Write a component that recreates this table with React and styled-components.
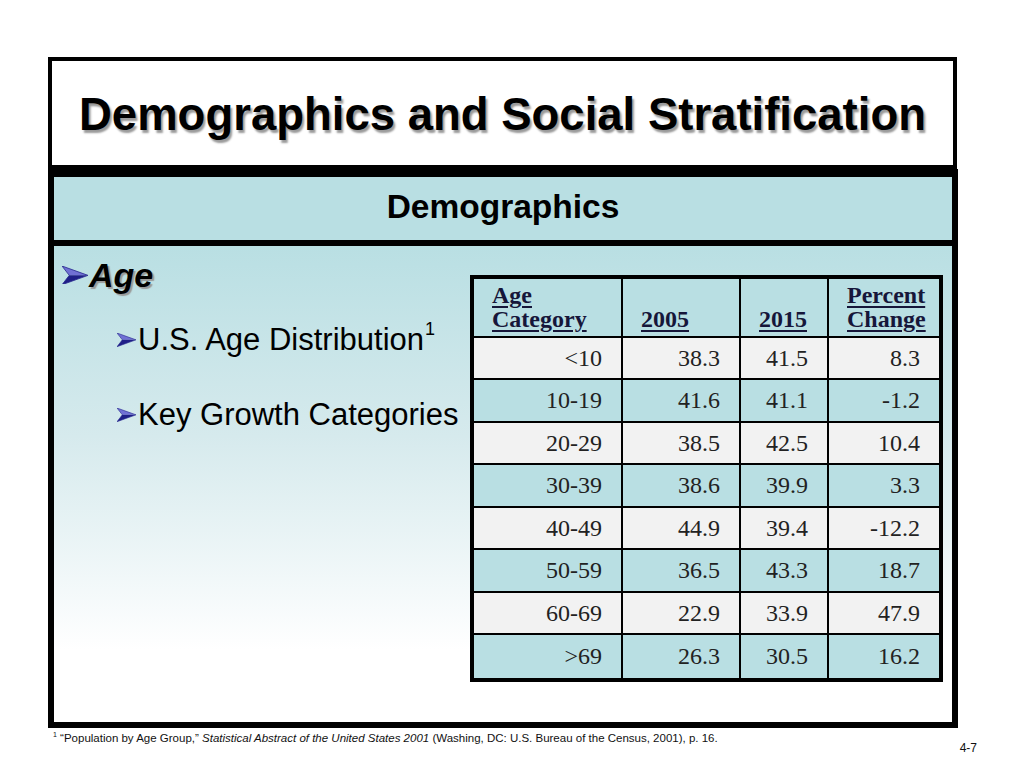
import React from 'react';
import styled, { createGlobalStyle } from 'styled-components';

const Global = createGlobalStyle`
  html, body { margin:0; padding:0; background:#fff; }
  body { font-family:"Liberation Sans", Arial, sans-serif; color:#000; }
`;

const Slide = styled.div`
  width:1024px; height:768px; box-sizing:border-box;
  padding:57px 66px 0 48px; display:flex; flex-direction:column;
`;

const TitleBox = styled.div`
  height:112px; box-sizing:border-box; width:909px; padding-top:3px;
  border:4px solid #000; display:flex; align-items:center; justify-content:center;
`;
const Title = styled.h1`
  margin:0; font-size:45.5px; font-weight:bold;
  text-shadow:2px 3px 2px #9a9a9a;
`;

const Band = styled.div`
  height:77px; box-sizing:border-box;
  border:6px solid #000; border-top-width:8px;
  background:#b9dfe3; display:flex; align-items:center; justify-content:center;
`;
const BandTitle = styled.h2`margin:0 0 4px; font-size:33.5px; font-weight:bold;`;

const Content = styled.div`
  height:482px; box-sizing:border-box;
  border:6px solid #000; border-top:none;
  background:linear-gradient(to bottom, #b9dfe3 0%, #d6eaed 40%, #ffffff 85%);
  display:flex;
`;

const Bullets = styled.div`width:416px; padding:9px 0 0 8px; box-sizing:border-box;`;
const Item = styled.div`
  display:flex; align-items:center; white-space:nowrap;
  margin-left:${p => p.$sub ? 55 : 0}px;
  margin-top:${p => p.$gap || 0}px;
  font-size:${p => p.$sub ? 31 : 34}px;
  line-height:${p => p.$sub ? 36 : 40}px;
  font-weight:${p => p.$sub ? 'normal' : 'bold'};
  font-style:${p => p.$sub ? 'normal' : 'italic'};
  text-shadow:${p => p.$sub ? 'none' : '2px 2px 1px #9a9a9a'};
`;
const Sup = styled.span`
  font-size:18px; line-height:0; align-self:flex-start; margin:7px 0 0 1px;
`;
const ArrowSvg = styled.svg`flex:none; margin-right:${p => p.$sub ? 2 : 1}px;`;

function Arrow({ size, sub }) {
  return (
    <ArrowSvg $sub={sub} width={size} height={size * 0.72} viewBox="0 0 25 18">
      <polygon points="0,0 25,9 7,9" fill="#7070d4" />
      <polygon points="7,9 25,9 0,18" fill="#1f1f88" />
      <polyline points="0,0 25,9 0,18 7,9 0,0" fill="none" stroke="#2a2a90" strokeWidth="0.8" />
    </ArrowSvg>
  );
}

const TableWrap = styled.div`padding-top:29px;`;
const Table = styled.table`
  border-collapse:separate; border-spacing:0; border:4px solid #000;
  font-family:"Liberation Serif", "Times New Roman", serif; font-size:24px;
`;
const Th = styled.th`
  width:${p => p.$w}px; height:59px; box-sizing:border-box;
  padding:0 12px 5px 18px; vertical-align:bottom; text-align:left;
  line-height:24px; font-weight:bold; color:#16163a; background:#b9dfe3;
  border-right:${p => p.$last ? 0 : 2}px solid #000; border-bottom:2px solid #000;
  span { text-decoration:underline; text-decoration-thickness:2px; text-underline-offset:3px; }
`;
const Td = styled.td`
  height:${p => p.$h}px; box-sizing:border-box; padding:0 19px 0 8px;
  text-align:right; vertical-align:middle; color:#222;
  background:${p => p.$alt ? '#b9dfe3' : '#f2f2f2'};
  border-right:${p => p.$last ? 0 : 2}px solid #000;
  border-bottom:${p => p.$bottom ? 0 : 2}px solid #000;
`;

const Footer = styled.div`
  display:flex; justify-content:space-between; padding:3px 0 0 5px;
  font-size:11.5px; color:#111; margin-right:-19px;
  sup { font-size:7px; }
`;
const PageNo = styled.div`font-size:12px; padding-top:10px;`;

const rows = [
  ['<10', '38.3', '41.5', '8.3'],
  ['10-19', '41.6', '41.1', '-1.2'],
  ['20-29', '38.5', '42.5', '10.4'],
  ['30-39', '38.6', '39.9', '3.3'],
  ['40-49', '44.9', '39.4', '-12.2'],
  ['50-59', '36.5', '43.3', '18.7'],
  ['60-69', '22.9', '33.9', '47.9'],
  ['>69', '26.3', '30.5', '16.2'],
];
const widths = [149, 118, 88, 110];

export default function App() {
  return (
    <>
      <Global />
      <Slide>
        <TitleBox><Title>Demographics and Social Stratification</Title></TitleBox>
        <Band><BandTitle>Demographics</BandTitle></Band>
        <Content>
          <Bullets>
            <Item><Arrow size={26} />Age</Item>
            <Item $sub $gap={27}><Arrow size={19} sub />U.S. Age Distribution<Sup>1</Sup></Item>
            <Item $sub $gap={39}><Arrow size={19} sub />Key Growth Categories</Item>
          </Bullets>
          <TableWrap>
            <Table>
              <thead>
                <tr>
                  <Th $w={widths[0]}><span>Age</span><br /><span>Category</span></Th>
                  <Th $w={widths[1]}><span>2005</span></Th>
                  <Th $w={widths[2]}><span>2015</span></Th>
                  <Th $w={widths[3]} $last><span>Percent</span><br /><span>Change</span></Th>
                </tr>
              </thead>
              <tbody>
                {rows.map((r, i) => (
                  <tr key={i}>
                    {r.map((c, j) => (
                      <Td key={j} $h={i % 2 === 0 ? 42 : 43} $alt={i % 2 === 1} $last={j === 3} $bottom={i === rows.length - 1}>{c}</Td>
                    ))}
                  </tr>
                ))}
              </tbody>
            </Table>
          </TableWrap>
        </Content>
        <Footer>
          <div><sup>1</sup> “Population by Age Group,” <i>Statistical Abstract of the United States 2001</i> (Washing, DC: U.S. Bureau of the Census, 2001), p. 16.</div>
          <PageNo>4-7</PageNo>
        </Footer>
      </Slide>
    </>
  );
}
